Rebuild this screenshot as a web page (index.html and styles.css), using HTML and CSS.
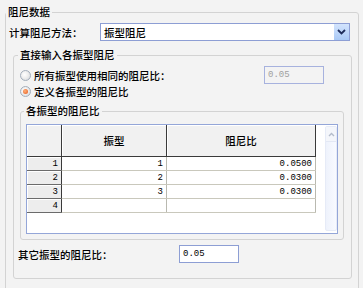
FILE: index.html
```html
<!DOCTYPE html>
<html lang="zh-CN">
<head>
    <meta charset="UTF-8">
    <title>阻尼数据</title>
    <link rel="stylesheet" href="styles.css">
</head>
<body>
    <fieldset class="group group-main">
        <legend>阻尼数据</legend>
        <div class="method-row">
            <span class="method-label">计算阻尼方法：</span>
            <div class="combo">
                <span class="combo-text">振型阻尼</span>
                <span class="combo-btn">
                    <svg width="9" height="6" viewBox="0 0 9 6"><path d="M1 1 L4.5 4.5 L8 1" fill="none" stroke="#1e2c5a" stroke-width="1.8"/></svg>
                </span>
            </div>
        </div>

        <fieldset class="group group-direct">
            <legend>直接输入各振型阻尼</legend>
            <div class="radio-row first">
                <span class="radio"></span>
                <span class="radio-label">所有振型使用相同的阻尼比：</span>
                <span class="num-input disabled">0.05</span>
            </div>
            <div class="radio-row">
                <span class="radio checked"></span>
                <span class="radio-label">定义各振型的阻尼比</span>
            </div>

            <fieldset class="group group-grid">
                <legend>各振型的阻尼比</legend>
                <div class="grid">
                    <table class="grid-table">
                        <tr class="head">
                            <th class="corner"></th>
                            <th class="c1">振型</th>
                            <th class="c2">阻尼比</th>
                        </tr>
                        <tr>
                            <td class="rowhead">1</td>
                            <td class="num">1</td>
                            <td class="num">0.0500</td>
                        </tr>
                        <tr>
                            <td class="rowhead">2</td>
                            <td class="num">2</td>
                            <td class="num">0.0300</td>
                        </tr>
                        <tr>
                            <td class="rowhead">3</td>
                            <td class="num">3</td>
                            <td class="num">0.0300</td>
                        </tr>
                        <tr>
                            <td class="rowhead">4</td>
                            <td class="num"></td>
                            <td class="num"></td>
                        </tr>
                    </table>
                    <div class="scrollbar">
                        <span class="scroll-up">
                            <svg width="7" height="5" viewBox="0 0 7 5"><path d="M1 4 L3.5 1.5 L6 4" fill="none" stroke="#b4bccb" stroke-width="1.4"/></svg>
                        </span>
                    </div>
                </div>
            </fieldset>

            <div class="other-row">
                <span class="other-label">其它振型的阻尼比：</span>
                <span class="num-input">0.05</span>
            </div>
        </fieldset>
    </fieldset>
</body>
</html>
```

FILE: styles.css
```css
body {
    margin: 0;
    width: 363px;
    height: 288px;
    background: #f3f3f3;
    font-family: "Noto Sans CJK SC", "DejaVu Sans", sans-serif;
    font-size: 10.5px;
    font-weight: 500;
    color: #000;
    overflow: hidden;
}
.group {
    border: 1px solid #d3d3d3;
    border-radius: 3px;
    min-width: 0;
}
.group legend {
    padding: 0 2px;
    line-height: 16px;
}
.group-main {
    margin: 4px 4px 0 5px;
    padding: 3px 6px 11px 3px;
}
.group-main > legend {
    margin-left: -3px;
}
.method-row {
    display: flex;
    align-items: center;
    height: 18px;
}
.method-label {
    width: 91px;
}
.combo {
    display: flex;
    align-items: center;
    width: 250px;
    height: 18px;
    box-sizing: border-box;
    border: 1px solid #8d9ed4;
    background: #fff;
}
.combo-text {
    flex: 1;
    padding-left: 3px;
}
.combo-btn {
    display: flex;
    align-items: center;
    justify-content: center;
    width: 15px;
    height: 16px;
    background: linear-gradient(#d3e4fd, #a9c9f6);
}
.group-direct {
    margin: 6px 0 0 4px;
    padding: 3px 7px 15px 5px;
}
.group-direct > legend {
    margin-left: -1px;
}
.radio-row {
    display: flex;
    align-items: center;
    height: 14px;
}
.radio-row.first {
    height: 18px;
}
.radio {
    width: 11px;
    height: 11px;
    box-sizing: border-box;
    margin: 0 3px 0 1px;
    border: 1px solid #a3aebb;
    border-radius: 50%;
    background: radial-gradient(circle at 40% 40%, #fff 0, #eee 45%, #cfd3d8 100%);
    display: flex;
    align-items: center;
    justify-content: center;
}
.radio.checked::after {
    content: "";
    width: 5px;
    height: 5px;
    border-radius: 50%;
    background: radial-gradient(circle at 40% 40%, #ffb17a, #e3561a);
}
.radio-label {
    flex: 1;
}
.num-input {
    width: 60px;
    height: 18px;
    box-sizing: border-box;
    border: 1px solid #8d9ed4;
    background: #fff;
    padding-left: 3px;
    font-family: "Liberation Mono", monospace;
    font-size: 9px;
    font-weight: normal;
    line-height: 16px;
}
.num-input.disabled {
    background: #f3f3f3;
    color: #a0a0a0;
    border-color: #a7b2de;
    margin-right: 20px;
}
.group-grid {
    margin: 5px 0 0 1px;
    padding: 5px 5px 5px 5px;
}
.group-grid > legend {
    margin-left: -2px;
}
.grid {
    display: flex;
    height: 110px;
    box-sizing: border-box;
    border: 1px solid #94a6d8;
    background: #fff;
}
.grid-table {
    border-collapse: collapse;
    table-layout: fixed;
    width: 286px;
    align-self: flex-start;
    margin-right: 9px;
}
.grid-table th {
    height: 31px;
    padding: 0;
    font-weight: 500;
    background: #f1f1f1;
    border-right: 1px solid #3a3a3a;
    border-bottom: 1px solid #3a3a3a;
    box-shadow: inset 1px 1px 0 #fff;
}
.grid-table .corner { width: 34px; }
.grid-table .c1 { width: 104px; }
.grid-table .c2 { width: 148px; }
.grid-table td {
    height: 13px;
    padding: 0 3px 0 0;
    text-align: right;
    font-family: "Liberation Mono", monospace;
    font-size: 9px;
    font-weight: normal;
    line-height: 12px;
    border-right: 1px solid #b9b9b0;
    border-bottom: 1px solid #c9c8bc;
}
.grid-table td.rowhead {
    background: #ededed;
    border-right: 1px solid #3a3a3a;
    border-bottom: 1px solid #6b6b6b;
    box-shadow: inset 1px 1px 0 #fff;
}
.scrollbar {
    width: 15px;
    margin-top: 1px;
    height: 105px;
    box-sizing: border-box;
    border: 1px solid #e6ebf7;
    border-radius: 2px;
    background: linear-gradient(to right, #eef2fc, #f8faff);
}
.scroll-up {
    display: flex;
    align-items: center;
    justify-content: center;
    height: 14px;
    border-bottom: 1px solid #e3e8f4;
    background: #f4f6fb;
}
.other-row {
    display: flex;
    align-items: center;
    margin-top: 5px;
    height: 18px;
}
.other-label {
    width: 161px;
    margin-left: -1px;
}
```
